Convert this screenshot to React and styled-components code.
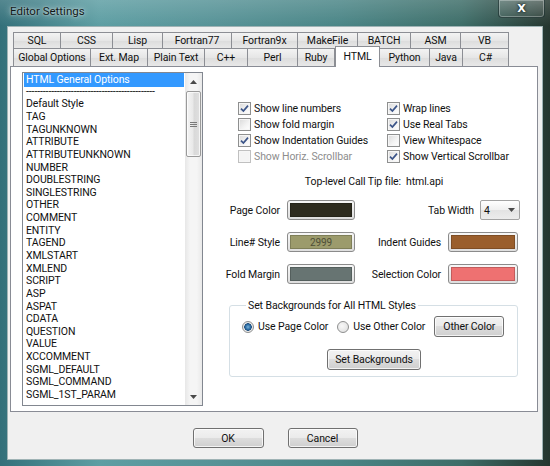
import React from "react";
import styled, { createGlobalStyle } from "styled-components";

const GlobalStyle = createGlobalStyle`
  html, body { margin: 0; padding: 0; background: #1f2d28; }
  body {
    font-family: Roboto, "Liberation Sans", Arial, sans-serif;
    font-size: 10.5px;
    letter-spacing: -0.1px;
    color: #111;
  }
  * { box-sizing: border-box; }
`;

const row1 = [
  ["SQL", 48], ["CSS", 52], ["Lisp", 50], ["Fortran77", 69], ["Fortran9x", 66],
  ["MakeFile", 60], ["BATCH", 53], ["ASM", 50], ["VB", 48],
];
const row2 = [
  ["Global Options", 78], ["Ext. Map", 57], ["Plain Text", 57], ["C++", 43], ["Perl", 50],
  ["Ruby", 37], ["HTML", 45], ["Python", 50], ["Java", 33], ["C#", 46],
];

const styles = [
  "HTML General Options", "-".repeat(46), "Default Style", "TAG", "TAGUNKNOWN",
  "ATTRIBUTE", "ATTRIBUTEUNKNOWN", "NUMBER", "DOUBLESTRING", "SINGLESTRING", "OTHER", "COMMENT",
  "ENTITY", "TAGEND", "XMLSTART", "XMLEND", "SCRIPT", "ASP", "ASPAT", "CDATA", "QUESTION", "VALUE",
  "XCCOMMENT", "SGML_DEFAULT", "SGML_COMMAND", "SGML_1ST_PARAM",
];

const options = [
  ["Show line numbers", true], ["Wrap lines", true],
  ["Show fold margin", false], ["Use Real Tabs", true],
  ["Show Indentation Guides", true], ["View Whitespace", false],
  ["Show Horiz. Scrollbar", false, true], ["Show Vertical Scrollbar", true],
];

const Window = styled.div`
  width: 550px;
  height: 466px;
  display: flex;
  flex-direction: column;
  padding: 0 7px 6px 7px;
  background:
    linear-gradient(180deg, rgba(255, 255, 255, 0.16), rgba(255, 255, 255, 0) 26px),
    linear-gradient(90deg, #33707a 0%, #5d9ea3 18%, #569296 40%, #4a8586 62%, #3d6d68 84%, #25362f 100%);
`;

const TitleBar = styled.div`
  height: 26px;
  display: flex;
  justify-content: space-between;
  align-items: flex-start;
  padding-left: 3px;
`;

const Title = styled.div`
  padding-top: 4px;
  line-height: 14px;
  font-size: 11.5px;
  letter-spacing: 0;
  color: #101818;
  text-shadow: 0 0 6px rgba(255, 255, 255, 0.8), 0 0 2px rgba(255, 255, 255, 0.6);
`;

const CloseButton = styled.div`
  width: 47px;
  height: 18px;
  margin-right: -2px;
  border: 1px solid rgba(20, 40, 40, 0.65);
  border-top: none;
  border-radius: 0 0 4px 4px;
  box-shadow: inset 0 0 0 1px rgba(255, 255, 255, 0.3);
  background: linear-gradient(rgba(255, 255, 255, 0.2), rgba(255, 255, 255, 0.05));
  display: flex;
  align-items: center;
  justify-content: center;
  color: #fff;
  font-family: "DejaVu Sans", sans-serif;
  font-weight: bold;
  font-size: 11px;
  text-shadow: 0 0 3px #1a2a2a, 0 0 2px #1a2a2a;
`;

const Client = styled.div`
  flex: 1;
  display: flex;
  flex-direction: column;
  background: #f0f0f0;
  border: 1px solid #9fb3b5;
  padding: 5px 4px 0 2px;
`;

const TabRows = styled.div`
  margin-left: 3px;
  display: flex;
  flex-direction: column;
`;

const TabRow = styled.div`
  display: flex;
  height: ${(p) => p.$h}px;
`;

const Tab = styled.div`
  width: ${(p) => p.$w}px;
  flex: none;
  display: flex;
  align-items: center;
  justify-content: center;
  border: 1px solid #8c8e94;
  border-bottom: none;
  border-left: ${(p) => (p.$first ? "1px solid #8c8e94" : "none")};
  background: linear-gradient(#f3f3f3, #e6e6e6 50%, #dcdcdc 51%, #e8e8e8);
  white-space: nowrap;
  position: relative;
  ${(p) =>
    p.$active &&
    `
    background: #fff;
    margin-top: -2px;
    height: 21px;
    margin-bottom: -1px;
    z-index: 2;
    border-left: 1px solid #8c8e94;
    align-items: flex-start;
    padding-top: 3px;
  `}
`;

const Panel = styled.div`
  height: 346px;
  display: flex;
  align-items: flex-start;
  background: #fff;
  border: 1px solid #898c95;
  padding: 5px 0 0 11px;
`;

const ListBox = styled.div`
  width: 181px;
  height: 334px;
  border: 1px solid #828790;
  display: flex;
  background: #fff;
`;

const ListItems = styled.div`
  flex: 1;
  padding: 0 1px;
  overflow: hidden;
`;

const ListItem = styled.div`
  height: 12.65px;
  line-height: 12.65px;
  padding-left: 2px;
  white-space: nowrap;
  overflow: hidden;
  color: ${(p) => (p.$selected ? "#fff" : "#111")};
  background: ${(p) => (p.$selected ? "#3399ff" : "transparent")};
  ${(p) => p.$selected && "height: 14px; line-height: 14px; margin-bottom: -1.35px;"}
`;

const ScrollBar = styled.div`
  width: 17px;
  display: flex;
  flex-direction: column;
  background: linear-gradient(90deg, #e7e7e7, #f5f5f5 30%, #f5f5f5 70%, #e9e9e9);
`;

const ArrowBox = styled.div`
  height: 17px;
  display: flex;
  align-items: center;
  justify-content: center;
`;

const Track = styled.div`
  flex: 1;
  padding: 1px 1px 0 1px;
`;

const Thumb = styled.div`
  height: 66px;
  border: 1px solid #9a9a9a;
  border-radius: 2px;
  background: linear-gradient(90deg, #f4f4f4, #e9e9e9 45%, #d9d9d9 55%, #e0e0e0);
  box-shadow: inset 0 0 0 1px rgba(255, 255, 255, 0.7);
  display: flex;
  align-items: center;
  justify-content: center;
`;

const Grip = styled.div`
  width: 7px;
  height: 5px;
  border-top: 1px solid #7a7a7a;
  border-bottom: 1px solid #7a7a7a;
  position: relative;
  &::after {
    content: "";
    position: absolute;
    left: 0;
    right: 0;
    top: 1px;
    border-top: 1px solid #7a7a7a;
  }
`;

const RightPane = styled.div`
  margin-left: 25px;
  margin-top: 28px;
  width: 292px;
  display: flex;
  flex-direction: column;
`;

const CheckGrid = styled.div`
  display: grid;
  grid-template-columns: 149px 1fr;
  grid-auto-rows: 16px;
  padding-left: 10px;
`;

const CheckRow = styled.label`
  display: flex;
  align-items: center;
  gap: 3px;
  color: ${(p) => (p.$disabled ? "#8d8d8d" : "#111")};
  white-space: nowrap;
`;

const Box = styled.span`
  width: 13px;
  height: 13px;
  flex: none;
  border: 1px solid ${(p) => (p.$disabled ? "#c0c0c0" : "#8e8f8f")};
  background: ${(p) =>
    p.$disabled ? "#f4f4f4" : "linear-gradient(135deg, #d9d9d9, #f4f4f4 60%, #ffffff)"};
  box-shadow: inset 0 0 0 1px #f6f6f6;
  display: flex;
  align-items: center;
  justify-content: center;
`;

const CallTip = styled.div`
  margin-top: 11px;
  line-height: 14px;
  text-align: center;
  white-space: pre;
`;

const ColorGrid = styled.div`
  margin-top: 11px;
  display: grid;
  grid-template-columns: 52px 68px 79px 70px;
  grid-auto-rows: 20px;
  column-gap: 7px;
  row-gap: 12px;
  align-items: center;
`;

const Label = styled.div`
  text-align: right;
  white-space: nowrap;
  direction: rtl;
`;

const RightCell = styled.div`
  grid-column: 3 / 5;
  display: flex;
  justify-content: flex-end;
  align-items: center;
  gap: 6px;
  margin-right: -2px;
`;

const Swatch = styled.div`
  height: 20px;
  border: 1px solid #8b8b8b;
  border-radius: 3px;
  padding: 2px;
  background: linear-gradient(#f7f7f7, #dedede);
  display: flex;
`;

const SwatchFill = styled.div`
  flex: 1;
  background: ${(p) => p.$color};
  border: 1px solid rgba(0, 0, 0, 0.18);
  display: flex;
  align-items: center;
  justify-content: center;
  color: #4f4f38;
  font-size: 10px;
`;

const Select = styled.div`
  width: 40px;
  height: 20px;
  border: 1px solid #a3a3a3;
  border-radius: 2px;
  background: linear-gradient(#ffffff, #f0f0f0 50%, #e3e3e3 51%, #ececec);
  display: flex;
  align-items: center;
  justify-content: space-between;
  padding: 0 4px 0 3px;
`;

const Group = styled.fieldset`
  margin: 15px 0 0 1px;
  width: 289px;
  border: 1px solid #d5dfe5;
  border-radius: 3px;
  padding: 4px 11px 6px 12px;
  display: flex;
  flex-direction: column;
  align-items: center;
`;

const Legend = styled.legend`
  padding: 0 2px;
  margin-left: 4px;
  line-height: 13px;
`;

const RadioRow = styled.div`
  align-self: stretch;
  display: flex;
  align-items: center;
  gap: 9px;
`;

const RadioLabel = styled.label`
  display: flex;
  align-items: center;
  gap: 4px;
  white-space: nowrap;
`;

const Radio = styled.span`
  width: 12px;
  height: 12px;
  border-radius: 50%;
  border: 1px solid #8e8f8f;
  background: ${(p) =>
    p.$checked
      ? "radial-gradient(circle, #7ab1d8 0, #2d6ea5 2.5px, #1c4c7c 3.5px, #e8e8e8 4px, #f6f6f6 100%)"
      : "radial-gradient(circle at 40% 40%, #f8f8f8, #dcdcdc)"};
`;

const Button = styled.button`
  width: ${(p) => p.$w}px;
  height: ${(p) => p.$h || 21}px;
  margin-top: ${(p) => p.$mt || 0}px;
  padding: 0;
  font: inherit;
  letter-spacing: inherit;
  color: #111;
  border: 1px solid #707070;
  border-radius: 3px;
  background: linear-gradient(#f2f2f2, #ebebeb 49%, #dddddd 50%, #cfcfcf);
  box-shadow: inset 0 0 0 1px rgba(255, 255, 255, 0.75);
  flex: none;
`;

const Footer = styled.div`
  display: flex;
  justify-content: center;
  gap: 24px;
  padding-top: 16px;
  padding-left: 2px;
`;

function Arrow({ up }) {
  return (
    <svg width="7" height="4" viewBox="0 0 7 4">
      <path d={up ? "M0 4 L3.5 0 L7 4 Z" : "M0 0 L3.5 4 L7 0 Z"} fill="#4a4a4a" />
    </svg>
  );
}

function Check() {
  return (
    <svg width="9" height="9" viewBox="0 0 9 9">
      <path d="M1 4.6 L3.4 7 L8 1.6" fill="none" stroke="#3b5488" strokeWidth="1.7" />
    </svg>
  );
}

export default function App() {
  return (
    <>
      <GlobalStyle />
      <Window>
        <TitleBar>
          <Title>Editor Settings</Title>
          <CloseButton>X</CloseButton>
        </TitleBar>
        <Client>
          <TabRows>
            <TabRow $h={16}>
              {row1.map(([t, w], i) => (
                <Tab key={t} $w={w} $first={i === 0}>{t}</Tab>
              ))}
            </TabRow>
            <TabRow $h={18}>
              {row2.map(([t, w], i) => (
                <Tab key={t} $w={w} $first={i === 0} $active={t === "HTML"}>{t}</Tab>
              ))}
            </TabRow>
          </TabRows>
          <Panel>
            <ListBox>
              <ListItems>
                {styles.map((s, i) => (
                  <ListItem key={i} $selected={i === 0}>{s}</ListItem>
                ))}
              </ListItems>
              <ScrollBar>
                <ArrowBox><Arrow up /></ArrowBox>
                <Track>
                  <Thumb><Grip /></Thumb>
                </Track>
                <ArrowBox><Arrow /></ArrowBox>
              </ScrollBar>
            </ListBox>
            <RightPane>
              <CheckGrid>
                {options.map(([t, on, dis]) => (
                  <CheckRow key={t} $disabled={dis}>
                    <Box $disabled={dis}>{on && <Check />}</Box>
                    {t}
                  </CheckRow>
                ))}
              </CheckGrid>
              <CallTip>{"Top-level Call Tip file:  html.api"}</CallTip>
              <ColorGrid>
                <Label>Page Color</Label>
                <Swatch><SwatchFill $color="#2e2c1f" /></Swatch>
                <RightCell>
                  <span>Tab Width</span>
                  <Select>
                    <span>4</span>
                    <Arrow />
                  </Select>
                </RightCell>
                <Label>Line# Style</Label>
                <Swatch><SwatchFill $color="#9c9b6c">2999</SwatchFill></Swatch>
                <Label>Indent Guides</Label>
                <Swatch><SwatchFill $color="#9a5e2c" /></Swatch>
                <Label>Fold Margin</Label>
                <Swatch><SwatchFill $color="#677472" /></Swatch>
                <Label>Selection Color</Label>
                <Swatch><SwatchFill $color="#ee7171" /></Swatch>
              </ColorGrid>
              <Group>
                <Legend>Set Backgrounds for All HTML Styles</Legend>
                <RadioRow>
                  <RadioLabel><Radio $checked />Use Page Color</RadioLabel>
                  <RadioLabel><Radio />Use Other Color</RadioLabel>
                  <Button $w={70}>Other Color</Button>
                </RadioRow>
                <Button $w={94} $mt={12}>Set Backgrounds</Button>
              </Group>
            </RightPane>
          </Panel>
          <Footer>
            <Button $w={71} $h={20}>OK</Button>
            <Button $w={70} $h={20}>Cancel</Button>
          </Footer>
        </Client>
      </Window>
    </>
  );
}
